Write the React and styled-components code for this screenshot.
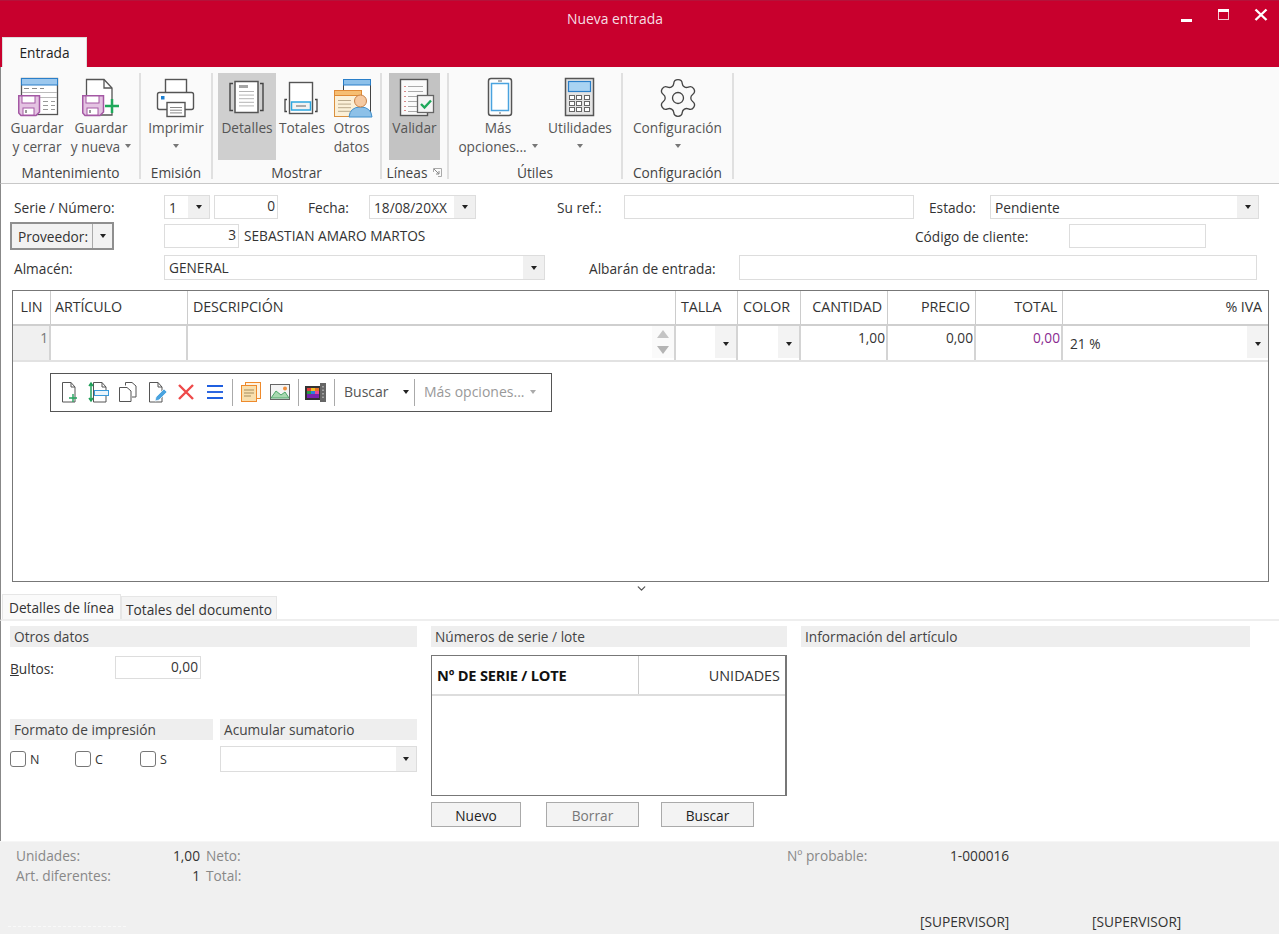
import React from 'react';
import styled, { createGlobalStyle } from 'styled-components';
import { Settings, ChevronDown } from 'lucide-react';

const Global = createGlobalStyle`
  html, body { margin: 0; padding: 0; background: #fff; }
  #root { width: 1279px; height: 934px; overflow: hidden; }
  * { box-sizing: border-box; }
`;

const FS = '13.7px';

const Page = styled.div`
  width: 1279px; height: 934px; overflow: hidden; display: flex; flex-direction: column;
  font-family: "Open Sans", "Noto Sans", sans-serif; font-size: ${FS}; color: #333; background: #fff;
`;
const TitleBar = styled.div`
  height: 37px; background: #c8002d; display: flex; padding-left: 60px; color: #fff; border-top: 1px solid #b5123a;
`;
const TitleText = styled.div`
  width: 1110px; text-align: center; line-height: 35px; font-size: 13.9px; color: #f6dfe4;
`;
const WinControls = styled.div`
  width: 109px; display: flex; align-items: flex-start; padding: 7px 0 0 11px; gap: 0;
`;
const WinIcon = styled.svg`
  display: block; flex: none;
`;
const TabStrip = styled.div`
  height: 30px; background: #c8002d; padding-left: 2px; display: flex; align-items: flex-end;
`;
const RibbonTab = styled.div`
  width: 85px; height: 30px; background: #fafafa; border: 1px solid #ddd; border-bottom: none;
  text-align: center; line-height: 30px; color: #222; font-size: ${FS};
`;
const Ribbon = styled.div`
  height: 117px; background: #fafafa; border-bottom: 1px solid #c8c8c8; border-left: 1px solid #888;
  display: flex; padding: 6px 0 4px 1px;
`;
const Group = styled.div`
  width: ${p => p.$w}px; display: flex; flex-direction: column; border-right: 2px solid #e0e0e0; position: relative;
`;
const GroupButtons = styled.div`
  height: 88px; display: flex; padding-left: ${p => p.$pl || 0}px; justify-content: ${p => p.$center ? 'center' : 'flex-start'};
`;
const GroupLabel = styled.div`
  flex: 1; display: flex; align-items: center; justify-content: center; gap: 6px; color: #444; font-size: ${FS}; white-space: nowrap; padding-top: 3px;
`;
const Launcher = styled.svg` display: block; `;
const RibbonBtn = styled.div`
  width: ${p => p.$w}px; height: 87px; flex: none; display: flex; flex-direction: column; align-items: center;
  background: ${p => p.$active || 'transparent'}; padding-top: 4px; color: #555; line-height: 19px; text-align: center; font-size: ${FS};
  svg.main { display: block; margin-bottom: 0; }
`;
const BtnText = styled.div` white-space: nowrap; padding-bottom: 3px; display: flex; align-items: center; justify-content: center; gap: 5px; height: 19px; `;
const SmallArrow = styled.span`
  display: inline-block; width: 0; height: 0; border-left: 3.5px solid transparent; border-right: 3.5px solid transparent;
  border-top: 4px solid ${p => p.$c || '#777'};
`;

const Form = styled.div`
  padding: 11px 0 0 0; border-left: 1px solid #888; display: flex; flex-direction: column; height: 106px;
`;
const Row = styled.div`
  display: flex; align-items: center; height: ${p => p.$h}px; margin-top: ${p => p.$mt || 0}px; padding-left: ${p => p.$pl ?? 13}px;
`;
const Label = styled.div`
  width: ${p => p.$w}px; margin-left: ${p => p.$ml || 0}px; flex: none; color: #333; white-space: nowrap; font-size: ${FS}; padding-top: 1px;
`;
const Input = styled.div`
  width: ${p => p.$w}px; height: ${p => p.$h || 24}px; margin-left: ${p => p.$ml || 0}px; flex: none; border: 1px solid #ddd; background: #fff;
  text-align: ${p => p.$right ? 'right' : 'left'}; padding: 0 2px; line-height: 19px; color: #333; white-space: nowrap;
`;
const Combo = styled.div`
  width: ${p => p.$w}px; height: ${p => p.$h || 24}px; margin-left: ${p => p.$ml || 0}px; flex: none; display: flex; border: 1px solid #ddd; background: #fff; color: #333;
`;
const ComboText = styled.div` flex: 1; padding-left: 4px; line-height: 23px; white-space: nowrap; overflow: hidden; `;
const ComboBtn = styled.div`
  width: ${p => p.$w || 21}px; background: #f0f0f0; display: flex; align-items: center; justify-content: center; flex: none;
`;
const Arrow = styled.span`
  display: inline-block; width: 0; height: 0; border-left: 3px solid transparent; border-right: 3px solid transparent; border-top: 4px solid #222;
`;
const Proveedor = styled.div`
  margin-left: -4px; width: 104px; height: 28px; border: 2px solid #8f8f8f; display: flex; background: #f2f2f2; flex: none;
`;
const ProvText = styled.div` flex: 1; text-align: center; line-height: 25px; border-right: 1px solid #aaa; color: #333; padding-left: 2px; white-space: nowrap; `;
const ProvArrow = styled.div` width: 19px; display: flex; align-items: center; justify-content: center; `;
const Plain = styled.div` margin-left: 5px; margin-top: -2px; color: #333; white-space: nowrap; width: ${p => p.$w}px; flex: none; `;

const Shell = styled.div` border-left: 1px solid #888; height: 292px; padding-left: 11px; `;
const Grid = styled.div`
  width: 1257px; height: 292px; border: 1px solid #777; background: #fff; display: flex; flex-direction: column;
`;
const GridRow = styled.div`
  display: grid; grid-template-columns: 38px 137px 488px 62px 63px 87px 88px 87px 1fr;
  height: ${p => p.$h}px; border-bottom: 2px solid ${p => p.$line};
`;
const HeadCell = styled.div`
  border-right: 1px solid #ccc; padding: 0 5px 0 ${p => p.$pl ?? 5}px; line-height: 32px; text-align: ${p => p.$right ? 'right' : p.$center ? 'center' : 'left'};
  font-size: 14.3px; letter-spacing: -0.1px; color: #333; white-space: nowrap; &:last-child { border-right: none; padding-right: 6px; }
`;
const Cell = styled.div`
  border-right: 2px solid #d4d4d4; background: ${p => p.$bg || '#fff'}; padding: 2px 1px 0 4px; line-height: 20px; text-align: ${p => p.$right ? 'right' : 'left'};
  color: ${p => p.$c || '#333'}; display: ${p => p.$flex ? 'flex' : 'block'}; position: relative; &:last-child { border-right: none; }
`;
const CellCombo = styled.div` display: flex; height: 32px; margin: -2px -1px 0 -4px; `;
const CellText = styled.div` flex: 1; padding: 8px 0 0 7px; line-height: 20px; color: #333; `;
const CellBtn = styled.div` width: 21px; background: #f3f3f3; display: flex; align-items: center; justify-content: center; padding-top: 3px; `;
const Spin = styled.div`
  width: 22px; margin: -2px -1px 0 auto; display: flex; flex-direction: column; align-items: center; gap: 8px; padding-top: 4px; background: #fafafa; height: 32px;
`;
const Toolbar = styled.div`
  width: 502px; height: 39px; margin: 11px 0 0 37px; border: 1px solid #555; display: flex; align-items: center; padding-left: 4px; background: #fff; flex: none;
`;
const ToolCell = styled.div` width: ${p => p.$w || 29}px; display: flex; justify-content: center; align-items: center; flex: none; height: 100%; padding-bottom: 1px; `;
const ToolSep = styled.div` width: 1px; height: 27px; background: #aaa; margin: 0 ${p => p.$mr ?? 3}px 0 ${p => p.$ml ?? 3}px; flex: none; `;
const ToolText = styled.div`
  color: ${p => p.$c}; width: ${p => p.$w}px; display: flex; align-items: center; justify-content: space-between; padding: 0 ${p => p.$pr || 0}px 2px 9px; flex: none; font-size: 14px; white-space: nowrap;
`;
const Splitter = styled.div` height: 13px; border-left: 1px solid #888; display: flex; justify-content: center; padding-left: 2px; align-items: flex-start; color: #555; `;
const LowerTabs = styled.div`
  height: 26px; display: flex; align-items: flex-end; padding-left: 1px; border-bottom: 2px solid #eee; border-left: 1px solid #888;
`;
const LowerTab = styled.div`
  height: ${p => p.$h}px; width: ${p => p.$w}px; background: ${p => p.$bg}; border: 1px solid #e6e6e6; border-bottom: none; text-align: center;
  line-height: 25px; color: #333; font-size: ${FS}; flex: none; white-space: nowrap;
`;
const Lower = styled.div`
  height: 220px; border-left: 1px solid #888; display: grid; grid-template-columns: 407px 356px 449px; column-gap: 14px; padding: 5px 0 0 9px; align-items: start;
`;
const Column = styled.div` display: flex; flex-direction: column; `;
const SectionHead = styled.div`
  height: 21px; background: #eee; padding-left: 4px; line-height: 22px; color: #444; width: ${p => p.$w ? p.$w + 'px' : 'auto'}; font-size: ${FS}; flex: none; white-space: nowrap;
`;
const BultosRow = styled.div` display: flex; align-items: center; height: 23px; margin-top: 9px; `;
const Underl = styled.span` text-decoration: underline; `;
const TwoCols = styled.div` display: flex; gap: 7px; margin-top: 40px; `;
const ChecksRow = styled.div` display: flex; align-items: center; height: 26px; margin-top: 6px; `;
const CheckItem = styled.div` width: 65px; display: flex; align-items: center; gap: 4px; color: #333; font-size: 12.5px; `;
const CheckBox = styled.div` width: 16px; height: 16px; border: 1px solid #777; border-radius: 3px; background: #fff; `;
const ComboSpot = styled.div` margin-left: 15px; `;
const LotTable = styled.div`
  width: 356px; height: 141px; margin-top: 8px; border: 1px solid #777; border-right-width: 2px; display: flex; flex-direction: column;
`;
const LotHead = styled.div` height: 40px; display: flex; border-bottom: 2px solid #ddd; `;
const LotCol = styled.div`
  width: ${p => p.$w}px; flex: ${p => p.$w ? 'none' : 1}; line-height: 39px; padding: 0 5px; text-align: ${p => p.$right ? 'right' : 'left'};
  font-weight: ${p => p.$b ? 700 : 400}; color: ${p => p.$b ? '#111' : '#333'}; border-right: ${p => p.$b ? '1px solid #ccc' : 'none'}; font-size: ${p => p.$b ? '14.6px' : '14.4px'}; letter-spacing: ${p => p.$b ? '-0.2px' : 0}; white-space: nowrap;
`;
const BtnRow = styled.div` display: flex; margin-top: 6px; `;
const Button = styled.div`
  width: ${p => p.$w}px; margin-left: ${p => p.$ml || 0}px; height: 25px; border: 1px solid #aaa; background: #f3f3f3; text-align: center; line-height: 26px; color: ${p => p.$c || '#222'}; font-size: ${FS};
`;
const Footer = styled.div`
  height: 93px; background: #f0f0f0; padding: 4px 0 0 16px; color: #888; flex: none; border-top: 1px solid #f6f6f6; position: relative;
`;
const FootRow = styled.div` display: flex; height: 20px; line-height: 20px; margin-top: ${p => p.$mt || 0}px; padding-left: ${p => p.$pl || 0}px; `;
const FootLabel = styled.div` width: ${p => p.$w}px; color: #888; flex: none; margin-left: ${p => p.$ml || 0}px; white-space: nowrap; `;
const FootVal = styled.div` width: ${p => p.$w}px; color: #333; text-align: ${p => p.$right ? 'right' : 'left'}; flex: none; white-space: nowrap; `;
const FaintLine = styled.div` position: absolute; left: 8px; bottom: 7px; width: 118px; border-top: 1px dashed #f9f9f9; `;

const Floppy = ({ x = 3, y = 18 }) => (
  <g transform={`translate(${x} ${y})`}>
    <path d="M.75.75H21.5V17l-3.5 3.5H3L.75 18Z" fill="#e4c3e2" stroke="#a458a4" strokeWidth="1.5" />
    <rect x="4" y="1" width="13" height="7" fill="#fff" stroke="#a458a4" />
    <rect x="5" y="13" width="11" height="7" fill="#fff" stroke="#a458a4" />
    <rect x="7" y="15" width="2" height="3" fill="#999" />
  </g>
);
const Main = ({ children }) => <svg className="main" width="44" height="42" viewBox="0 0 44 42" fill="none">{children}</svg>;
const Lines = ({ x, y, w, n, gap = 4, c = '#b5b5b5' }) => (
  <g stroke={c}>{Array.from({ length: n }).map((_, i) => <path key={i} d={`M${x} ${y + i * gap + .5}h${w}`} />)}</g>
);

const IconSaveClose = () => (
  <Main>
    <rect x="6.5" y="1.5" width="36" height="36" fill="#fff" stroke="#555" strokeWidth="1.3" />
    <rect x="6.5" y="1.5" width="36" height="6.5" fill="#9cc8ee" stroke="#2a7fc9" />
    <path d="M9 11.5h5M17 11.5h5M25 11.5h4" stroke="#888" />
    <path d="M7 15.5h35M7 20.5h35" stroke="#bbb" />
    <path d="M28 24.5h5M36 24.5h4M28 28.5h5M36 28.5h4M28 32.5h5M36 32.5h4" stroke="#999" />
    <Floppy />
  </Main>
);
const IconSaveNew = () => (
  <Main>
    <path d="M7.5 2.5H25L33 11V38H7.5Z" fill="#fff" stroke="#555" strokeWidth="1.3" />
    <path d="M25 2.5V11H33" stroke="#555" strokeWidth="1.3" />
    <Floppy />
    <path d="M33 22V36M26 29H40" stroke="#1ea85a" strokeWidth="2.5" />
  </Main>
);
const IconPrint = () => (
  <Main>
    <rect x="11.5" y="2.5" width="21" height="14" fill="#fff" stroke="#555" strokeWidth="1.4" />
    <rect x="3.5" y="15.5" width="36" height="17" rx="2" fill="#fff" stroke="#555" strokeWidth="1.4" />
    <rect x="7" y="19" width="3.5" height="3.5" fill="#1b7fd1" />
    <rect x="13" y="25.5" width="18" height="14" fill="#fff" stroke="#555" strokeWidth="1.4" />
    <Lines x={16} y={30} w={12} n={3} gap={2.7} c="#888" />
  </Main>
);
const IconDetalles = () => (
  <Main>
    <path d="M8 6.5H5V33.5H8M35 6.5H38V33.5H35" stroke="#444" strokeWidth="1.4" />
    <rect x="10" y="4.5" width="23" height="31" fill="#fff" stroke="#555" strokeWidth="1.5" />
    <rect x="14" y="8" width="9" height="3" fill="#a5a5a5" />
    <Lines x={14} y={14} w={15} n={5} gap={3.6} />
  </Main>
);
const IconTotales = () => (
  <Main>
    <rect x="9.5" y="5.5" width="23" height="31" fill="#fff" stroke="#555" strokeWidth="1.4" />
    <path d="M7 22.5H5V34.5H7M35 22.5H37V34.5H35" stroke="#444" strokeWidth="1.3" />
    <rect x="11.5" y="25" width="19" height="8" fill="#f2f2f2" stroke="#2ca6e0" strokeWidth="1.5" />
    <path d="M16 29h10" stroke="#aaa" strokeWidth="2" />
  </Main>
);
const IconOtros = () => (
  <Main>
    <rect x="13.5" y="2.5" width="27" height="35" fill="#fff" stroke="#444" />
    <rect x="13.5" y="2.5" width="27" height="5.5" fill="#8cc0ea" stroke="#2a7fc9" />
    <rect x="4.5" y="13.5" width="27" height="26" fill="#fbf0d8" stroke="#d9903f" />
    <rect x="4.5" y="13.5" width="27" height="5" fill="#f6be72" stroke="#e08a35" />
    <Lines x={8} y={23} w={13} n={4} gap={3.6} c="#b9a98c" />
    <path d="M19 40Q20 30 30.5 30Q41 30 42 40Z" fill="#8dc1e8" stroke="#3f8fcc" />
    <circle cx="30.5" cy="24" r="6" fill="#f6caa2" stroke="#c8834a" />
  </Main>
);
const IconValidar = () => (
  <Main>
    <rect x="7.5" y="2.5" width="27" height="36" fill="#fafafa" stroke="#555" strokeWidth="1.4" />
    <path d="M11 9.5h2M11 14.5h2M11 19.5h2M11 24.5h2M11 29.5h2M11 33.5h2" stroke="#d98a8a" />
    <Lines x={15} y={9} w={15} n={6} gap={5} c="#aaa" />
    <rect x="24.5" y="18.5" width="16" height="17" fill="#f4f4f4" stroke="#666" strokeWidth="1.3" />
    <path d="M28 27l3.5 3.5L38 23.5" stroke="#1ea85a" strokeWidth="2.4" />
  </Main>
);
const IconPhone = () => (
  <Main>
    <rect x="12.5" y="1.5" width="23" height="37" rx="2.5" fill="#fff" stroke="#555" strokeWidth="1.5" />
    <rect x="15.5" y="6.5" width="17" height="27" fill="#fff" stroke="#4aa3df" strokeWidth="1.5" />
    <path d="M22 4h4M23 36h2" stroke="#666" />
  </Main>
);
const IconCalc = () => (
  <Main>
    <rect x="7.5" y="1.5" width="28" height="37" fill="#e4e4e4" stroke="#555" strokeWidth="1.5" />
    <rect x="10.5" y="4.5" width="22" height="10" fill="#a9d3f2" stroke="#2a7fc9" strokeWidth="1.2" />
    {[18, 24, 30].map(y => [11, 18, 26].map(x => <rect key={x + '-' + y} x={x + .5} y={y + .5} width="5" height="4" fill="#fff" stroke="#666" />))}
  </Main>
);
const GearWrap = styled.div` height: 42px; display: flex; align-items: center; justify-content: center; `;
const IconGear = () => <GearWrap><Settings size={44} strokeWidth={0.72} color="#444" /></GearWrap>;

const TI = ({ children, w = 22, h = 22 }) => <svg width={w} height={h} viewBox={`0 0 ${w} ${h}`} fill="none">{children}</svg>;
const Doc = ({ x = 3, y = 1 }) => <path transform={`translate(${x} ${y})`} d="M.5.5H9L13 5V20H.5ZM9 .5V5H13" fill="#fff" stroke="#555" />;

const ToolIcons = {
  add: <TI><Doc /><path d="M14 13v8M10 17h8" stroke="#23a45d" strokeWidth="1.4" /></TI>,
  ins: <TI><Doc x={5} /><path d="M3 3v16M1 5l2-3 2 3M1 17l2 3 2-3" stroke="#1e9e58" strokeWidth="1.5" /><rect x="6.5" y="9.5" width="14" height="5" fill="#eaf4fb" stroke="#3a9ad9" /></TI>,
  copy: <TI><path d="M8.5 4.5V1.5H15L19 5V16H15" fill="#fff" stroke="#555" /><path d="M2.5 6.5H10L14 10V20.5H2.5Z" fill="#fff" stroke="#555" /></TI>,
  edit: <TI><Doc /><path d="M9 20l1-4 8-8 3 3-8 8Z" fill="#4aa3df" stroke="#fff" strokeWidth=".7" /></TI>,
  del: <TI><path d="M4 4L18 18M18 4L4 18" stroke="#ee4a4a" strokeWidth="2.4" /></TI>,
  list: <TI><path d="M3 5h16M3 17h16" stroke="#1f5fe0" strokeWidth="2" /><path d="M3 11h16" stroke="#2f68e0" strokeWidth="2" /></TI>,
  pages: <TI><rect x="5.5" y="1.5" width="15" height="16" fill="#fdf3e3" stroke="#ee8a2c" /><rect x="1.5" y="4.5" width="15" height="16" fill="#f8dfae" stroke="#ee8a2c" /><path d="M4 9h10M4 12h10M4 15h7" stroke="#a58d5f" /></TI>,
  image: <TI><rect x="1.5" y="3.5" width="19" height="15" fill="#f4f4f4" stroke="#666" /><path d="M2 17L7 10l5 4 4-3 4 6Z" fill="#a8d8b0" stroke="#4ea56a" /><circle cx="16" cy="7.5" r="2" fill="#f08f3c" /></TI>,
  color: <TI w={24}><rect x="1" y="5" width="15" height="14" fill="#333" /><rect x="3" y="7" width="4" height="3" fill="#e63c3c" /><rect x="7" y="7" width="4" height="3" fill="#f4c220" /><rect x="11" y="7" width="4" height="3" fill="#e8702a" /><rect x="3" y="10" width="4" height="3" fill="#2a9d4a" /><rect x="7" y="10" width="4" height="3" fill="#2a7fdc" /><rect x="11" y="10" width="4" height="3" fill="#e84a9a" /><rect x="3" y="13" width="12" height="4" fill="#7a22b0" /><rect x="16" y="2" width="6" height="19" fill="#666" /><path d="M19 5v12" stroke="#ddd" strokeDasharray="1.5 2" /></TI>
};

export default function App() {
  return (
    <Page>
      <Global />
      <TitleBar>
        <TitleText>Nueva entrada</TitleText>
        <WinControls>
          <WinIcon width="26" height="14" viewBox="0 0 26 14"><rect x="0" y="11" width="11" height="3" fill="#fff" /></WinIcon>
          <WinIcon width="47" height="14" viewBox="0 0 47 14"><rect x="11.5" y="1.5" width="10" height="10" fill="none" stroke="#f4c8d2" /><rect x="11" y="1" width="11" height="3" fill="#fff" /></WinIcon>
          <WinIcon width="14" height="14" viewBox="0 0 14 14"><path d="M1.5 1.5L12.5 12M12.5 1.5L1.5 12" stroke="#fff" strokeWidth="2.4" /></WinIcon>
        </WinControls>
      </TitleBar>
      <TabStrip><RibbonTab>Entrada</RibbonTab></TabStrip>
      <Ribbon>
        <Group $w={139}>
          <GroupButtons $pl={3}>
            <RibbonBtn $w={64}><IconSaveClose /><BtnText>Guardar</BtnText><BtnText>y cerrar</BtnText></RibbonBtn>
            <RibbonBtn $w={64}><IconSaveNew /><BtnText>Guardar</BtnText><BtnText>y nueva <SmallArrow /></BtnText></RibbonBtn>
          </GroupButtons>
          <GroupLabel>Mantenimiento</GroupLabel>
        </Group>
        <Group $w={72}>
          <GroupButtons $center>
            <RibbonBtn $w={70}><IconPrint /><BtnText>Imprimir</BtnText><BtnText><SmallArrow /></BtnText></RibbonBtn>
          </GroupButtons>
          <GroupLabel>Emisión</GroupLabel>
        </Group>
        <Group $w={169}>
          <GroupButtons $pl={5}>
            <RibbonBtn $w={58} $active="#cfcfcf"><IconDetalles /><BtnText>Detalles</BtnText></RibbonBtn>
            <RibbonBtn $w={52}><IconTotales /><BtnText>Totales</BtnText></RibbonBtn>
            <RibbonBtn $w={47}><IconOtros /><BtnText>Otros</BtnText><BtnText>datos</BtnText></RibbonBtn>
          </GroupButtons>
          <GroupLabel>Mostrar</GroupLabel>
        </Group>
        <Group $w={67}>
          <GroupButtons $pl={7}>
            <RibbonBtn $w={51} $active="#c3c3c3"><IconValidar /><BtnText>Validar</BtnText></RibbonBtn>
          </GroupButtons>
          <GroupLabel>Líneas
            <Launcher width="9" height="9" viewBox="0 0 9 9" fill="none"><path d="M.5 4V.5H8.5V8.5H5" stroke="#aaa" /><path d="M1 1l5 5M6 3v3H3" stroke="#888" /></Launcher>
          </GroupLabel>
        </Group>
        <Group $w={174}>
          <GroupButtons $pl={5}>
            <RibbonBtn $w={88}><IconPhone /><BtnText>Más</BtnText><BtnText>opciones... <SmallArrow /></BtnText></RibbonBtn>
            <RibbonBtn $w={76}><IconCalc /><BtnText>Utilidades</BtnText><BtnText><SmallArrow /></BtnText></RibbonBtn>
          </GroupButtons>
          <GroupLabel>Útiles</GroupLabel>
        </Group>
        <Group $w={111}>
          <GroupButtons $center>
            <RibbonBtn $w={104}><IconGear /><BtnText>Configuración</BtnText><BtnText><SmallArrow /></BtnText></RibbonBtn>
          </GroupButtons>
          <GroupLabel>Configuración</GroupLabel>
        </Group>
      </Ribbon>

      <Form>
        <Row $h={24}>
          <Label $w={150}>Serie / Número:</Label>
          <Combo $w={46}><ComboText>1</ComboText><ComboBtn><Arrow /></ComboBtn></Combo>
          <Input $w={64} $ml={4} $right>0</Input>
          <Label $w={61} $ml={30}>Fecha:</Label>
          <Combo $w={107}><ComboText>18/08/20XX</ComboText><ComboBtn><Arrow /></ComboBtn></Combo>
          <Label $w={67} $ml={81}>Su ref.:</Label>
          <Input $w={290} />
          <Label $w={61} $ml={15}>Estado:</Label>
          <Combo $w={269}><ComboText>Pendiente</ComboText><ComboBtn><Arrow /></ComboBtn></Combo>
        </Row>
        <Row $h={28} $mt={3}>
          <Proveedor><ProvText>Proveedor:</ProvText><ProvArrow><Arrow /></ProvArrow></Proveedor>
          <Input $w={75} $ml={50} $right>3</Input>
          <Plain $w={671}>SEBASTIAN AMARO MARTOS</Plain>
          <Label $w={154}>Código de cliente:</Label>
          <Input $w={137} />
        </Row>
        <Row $h={25} $mt={5}>
          <Label $w={150}>Almacén:</Label>
          <Combo $w={381} $h={25}><ComboText>GENERAL</ComboText><ComboBtn><Arrow /></ComboBtn></Combo>
          <Label $w={150} $ml={44}>Albarán de entrada:</Label>
          <Input $w={518} $h={25} />
        </Row>
      </Form>

      <Shell>
        <Grid>
          <GridRow $h={35} $line="#cfcfcf">
            <HeadCell $center>LIN</HeadCell>
            <HeadCell $pl={4}>ARTÍCULO</HeadCell>
            <HeadCell>DESCRIPCIÓN</HeadCell>
            <HeadCell>TALLA</HeadCell>
            <HeadCell>COLOR</HeadCell>
            <HeadCell $right>CANTIDAD</HeadCell>
            <HeadCell $right>PRECIO</HeadCell>
            <HeadCell $right>TOTAL</HeadCell>
            <HeadCell $right>% IVA</HeadCell>
          </GridRow>
          <GridRow $h={36} $line="#e2e2e2">
            <Cell $right $bg="#f0f0f0" $c="#777">1</Cell>
            <Cell />
            <Cell $flex>
              <Spin>
                <svg width="12" height="8" viewBox="0 0 12 8"><path d="M6 0l6 8H0Z" fill="#c4c4c4" /></svg>
                <svg width="12" height="8" viewBox="0 0 12 8"><path d="M6 8L0 0h12Z" fill="#b4b4b4" /></svg>
              </Spin>
            </Cell>
            <Cell><CellCombo><CellText /><CellBtn><Arrow /></CellBtn></CellCombo></Cell>
            <Cell><CellCombo><CellText /><CellBtn><Arrow /></CellBtn></CellCombo></Cell>
            <Cell $right>1,00</Cell>
            <Cell $right>0,00</Cell>
            <Cell $right $c="#8a2a90">0,00</Cell>
            <Cell><CellCombo><CellText>21 %</CellText><CellBtn><Arrow /></CellBtn></CellCombo></Cell>
          </GridRow>
          <Toolbar>
            {['add', 'ins', 'copy', 'edit', 'del', 'list'].map(k => <ToolCell key={k}>{ToolIcons[k]}</ToolCell>)}
            <ToolSep />
            {['pages', 'image'].map(k => <ToolCell key={k}>{ToolIcons[k]}</ToolCell>)}
            <ToolSep $ml={4} $mr={2} />
            <ToolCell $w={30}>{ToolIcons.color}</ToolCell>
            <ToolSep $ml={3} $mr={0} />
            <ToolText $c="#555" $w={79} $pr={5}>Buscar <Arrow /></ToolText>
            <ToolSep $ml={0} $mr={0} />
            <ToolText $c="#999" $w={130} $pr={9}>Más opciones... <SmallArrow $c="#aaa" /></ToolText>
          </Toolbar>
        </Grid>
      </Shell>

      <Splitter><ChevronDown size={13} strokeWidth={2.4} /></Splitter>
      <LowerTabs>
        <LowerTab $h={25} $w={119} $bg="#fafafa">Detalles de línea</LowerTab>
        <LowerTab $h={23} $w={156} $bg="#f4f4f4">Totales del documento</LowerTab>
      </LowerTabs>
      <Lower>
        <Column>
          <SectionHead>Otros datos</SectionHead>
          <BultosRow>
            <Label $w={105}><Underl>B</Underl>ultos:</Label>
            <Input $w={86} $h={23} $right>0,00</Input>
          </BultosRow>
          <TwoCols>
            <SectionHead $w={203}>Formato de impresión</SectionHead>
            <SectionHead $w={197}>Acumular sumatorio</SectionHead>
          </TwoCols>
          <ChecksRow>
            <CheckItem><CheckBox />N</CheckItem>
            <CheckItem><CheckBox />C</CheckItem>
            <CheckItem><CheckBox />S</CheckItem>
            <ComboSpot>
              <Combo $w={197} $h={26}><ComboText /><ComboBtn $w={20}><Arrow /></ComboBtn></Combo>
            </ComboSpot>
          </ChecksRow>
        </Column>
        <Column>
          <SectionHead>Números de serie / lote</SectionHead>
          <LotTable>
            <LotHead>
              <LotCol $w={207} $b>Nº DE SERIE / LOTE</LotCol>
              <LotCol $right>UNIDADES</LotCol>
            </LotHead>
          </LotTable>
          <BtnRow>
            <Button $w={90}>Nuevo</Button>
            <Button $w={93} $ml={25} $c="#777">Borrar</Button>
            <Button $w={93} $ml={22}>Buscar</Button>
          </BtnRow>
        </Column>
        <Column>
          <SectionHead>Información del artículo</SectionHead>
        </Column>
      </Lower>
      <Footer>
        <FootRow>
          <FootLabel $w={130}>Unidades:</FootLabel>
          <FootVal $w={54} $right>1,00</FootVal>
          <FootLabel $w={581} $ml={6}>Neto:</FootLabel>
          <FootLabel $w={163}>Nº probable:</FootLabel>
          <FootVal $w={80}>1-000016</FootVal>
        </FootRow>
        <FootRow>
          <FootLabel $w={130}>Art. diferentes:</FootLabel>
          <FootVal $w={54} $right>1</FootVal>
          <FootLabel $w={100} $ml={6}>Total:</FootLabel>
        </FootRow>
        <FootRow $mt={26} $pl={904}>
          <FootVal $w={172}>[SUPERVISOR]</FootVal>
          <FootVal $w={100}>[SUPERVISOR]</FootVal>
        </FootRow>
        <FaintLine />
      </Footer>
    </Page>
  );
}
